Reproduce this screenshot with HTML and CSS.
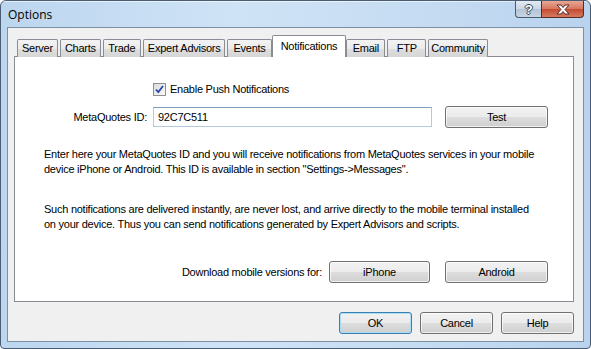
FILE: index.html
```html
<!DOCTYPE html>
<html lang="en">
<head>
    <meta charset="UTF-8">
    <title>Options</title>
    <link rel="stylesheet" href="styles.css">
</head>
<body>
    <div class="window">
        <div class="titlebar">
            <span class="title">Options</span>
            <div class="caption-buttons">
                <div class="cap-btn cap-help">?</div>
                <div class="cap-btn cap-close">
                    <svg width="16" height="11" viewBox="0 0 16 11">
                        <path d="M2 1h4l2 2.5L10 1h4l-4 4.5 4 4.5h-4L8 7.5 6 10H2l4-4.5z" fill="#fff" stroke="#5a2a24" stroke-width="1" stroke-linejoin="round"/>
                    </svg>
                </div>
            </div>
        </div>

        <div class="client">
            <div class="tabstrip">
                <div class="tab">Server</div>
                <div class="tab">Charts</div>
                <div class="tab">Trade</div>
                <div class="tab">Expert Advisors</div>
                <div class="tab wide">Events</div>
                <div class="tab active">Notifications</div>
                <div class="tab wide">Email</div>
                <div class="tab wide">FTP</div>
                <div class="tab narrow">Community</div>
            </div>

            <div class="panel">
                <div class="check-row">
                    <span class="checkbox">
                        <svg width="9" height="9" viewBox="0 0 9 9">
                            <path d="M1 4.5l2.3 2.6L8 1" fill="none" stroke="#2a46a8" stroke-width="1.8"/>
                        </svg>
                    </span>
                    <span>Enable Push Notifications</span>
                </div>
                <div class="id-row">
                    <label class="id-label" for="mqid">MetaQuotes ID:</label>
                    <input class="id-input" id="mqid" type="text" value="92C7C511">
                    <button class="btn btn-wide">Test</button>
                </div>
                <p class="info first">
                    Enter here your MetaQuotes ID and you will receive notifications from MetaQuotes services in your mobile<br>
                    device iPhone or Android. This ID is available in section "Settings-&gt;Messages".
                </p>
                <p class="info second">
                    Such notifications are delivered instantly, are never lost, and arrive directly to the mobile terminal installed<br>
                    on your device. Thus you can send notifications generated by Expert Advisors and scripts.
                </p>
                <div class="download-row">
                    <span class="download-label">Download mobile versions for:</span>
                    <button class="btn btn-iphone">iPhone</button>
                    <button class="btn btn-wide">Android</button>
                </div>
            </div>

            <div class="footer">
                <button class="btn btn-dialog default">OK</button>
                <button class="btn btn-dialog">Cancel</button>
                <button class="btn btn-dialog">Help</button>
            </div>
        </div>
    </div>
</body>
</html>
```
FILE: styles.css
```css
html, body {
    margin: 0;
    padding: 0;
    background: #ffffff;
}
body {
    font-family: "Liberation Sans", Arial, sans-serif;
    font-size: 11px;
    letter-spacing: -0.25px;
    color: #000;
}
.window {
    width: 591px;
    height: 349px;
    box-sizing: border-box;
    border: 1px solid #4a5d73;
    border-radius: 6px 6px 4px 4px;
    background: linear-gradient(90deg, #bcd6ef 0%, #cfe3f6 40%, #c6dcf2 70%, #b9d3ee 100%);
    display: flex;
    flex-direction: column;
    overflow: hidden;
}
.titlebar {
    height: 26px;
    display: flex;
    justify-content: space-between;
    align-items: flex-start;
    padding-left: 7px;
    box-shadow: inset 0 1px 0 rgba(255,255,255,0.6);
}
.title {
    font-family: "Open Sans", "Liberation Sans", sans-serif;
    font-size: 12px;
    letter-spacing: 0;
    line-height: 27px;
    color: #000;
}
.caption-buttons {
    display: flex;
    margin-right: 6px;
}
.cap-btn {
    height: 17px;
    box-sizing: border-box;
    border: 1px solid #4b5a6c;
    border-top: none;
    display: flex;
    align-items: center;
    justify-content: center;
}
.cap-help {
    width: 26px;
    border-radius: 0 0 0 4px;
    border-right: none;
    background: linear-gradient(#e3ebf3, #c9d6e4 50%, #b3c4d6 51%, #c6d5e5);
    color: #fff;
    font-weight: bold;
    font-size: 13px;
    text-shadow: -1px 0 #3a4656, 1px 0 #3a4656, 0 -1px #3a4656, 0 1px #3a4656;
}
.cap-close {
    width: 43px;
    border-radius: 0 0 4px 0;
    border-color: #5a2a24;
    background: linear-gradient(#e8a795, #d7765f 50%, #c34a33 51%, #d57b5e);
}
.client {
    flex: 1;
    margin: 0 6px 6px 6px;
    border: 1px solid #7d8fa3;
    background: #f0f0f0;
    display: flex;
    flex-direction: column;
    padding: 7px 9px 0 6px;
}
.tabstrip {
    display: flex;
    align-items: flex-end;
    height: 22px;
    padding-left: 3px;
    margin-bottom: -1px;
    position: relative;
    z-index: 1;
}
.tab {
    height: 18px;
    min-width: 38px;
    box-sizing: border-box;
    border: 1px solid #898c95;
    border-bottom: none;
    background: linear-gradient(#f3f3f3, #ebebeb 50%, #dedede 51%, #d6d6d6);
    padding: 0 4px;
    text-align: center;
    line-height: 17px;
    margin-right: 2px;
    border-radius: 2px 2px 0 0;
}
.tab.wide {
    min-width: 39px;
    padding: 0 5px;
}
.tab.narrow {
    padding: 0 2px;
}
.tab.active {
    height: 22px;
    background: #fff;
    line-height: 20px;
    margin-left: -2px;
    margin-right: 0;
    padding: 0 8px;
}
.panel {
    height: 246px;
    box-sizing: border-box;
    border: 1px solid #898c95;
    background: #fff;
    padding: 0 25px 0 29px;
    display: flex;
    flex-direction: column;
}
.check-row {
    margin-top: 24px;
    margin-left: 109px;
    height: 16px;
    display: flex;
    align-items: center;
    gap: 4px;
}
.checkbox {
    width: 13px;
    height: 13px;
    box-sizing: border-box;
    border: 1px solid #8e8f8f;
    background: linear-gradient(135deg, #dcdcdc, #fafafa);
    display: flex;
    align-items: center;
    justify-content: center;
}
.id-row {
    margin-top: 9px;
    display: flex;
    align-items: center;
}
.id-label {
    width: 103px;
    text-align: right;
    margin-right: 6px;
}
.id-input {
    width: 279px;
    height: 20px;
    box-sizing: border-box;
    margin: 0 13px 0 0;
    padding: 0 4px;
    border: 1px solid #b5c9dd;
    border-top-color: #7c9cbc;
    font-family: inherit;
    font-size: 11px;
    letter-spacing: inherit;
    color: #000;
    outline: none;
}
.btn {
    height: 22px;
    box-sizing: border-box;
    border: 1px solid #707070;
    border-radius: 3px;
    background: linear-gradient(#f2f2f2, #ebebeb 50%, #dddddd 51%, #cfcfcf);
    box-shadow: inset 0 0 0 1px rgba(255,255,255,0.7);
    font-family: inherit;
    font-size: 11px;
    letter-spacing: inherit;
    color: #000;
    padding: 0;
}
.btn-wide {
    width: 103px;
}
.btn-iphone {
    width: 101px;
    margin-right: 15px;
}
.info {
    margin: 0;
    line-height: 15px;
    white-space: nowrap;
}
.info.first {
    margin-top: 19px;
}
.info.second {
    margin-top: 25px;
}
.download-row {
    margin-top: 29px;
    display: flex;
    align-items: center;
    justify-content: flex-end;
}
.download-label {
    margin-right: 7px;
}
.footer {
    display: flex;
    justify-content: flex-end;
    gap: 8px;
    margin-top: 10px;
}
.btn-dialog {
    width: 73px;
}
.btn.default {
    border-color: #3c7fb1;
    box-shadow: inset 0 0 0 1px #a8dcf7;
}
```
